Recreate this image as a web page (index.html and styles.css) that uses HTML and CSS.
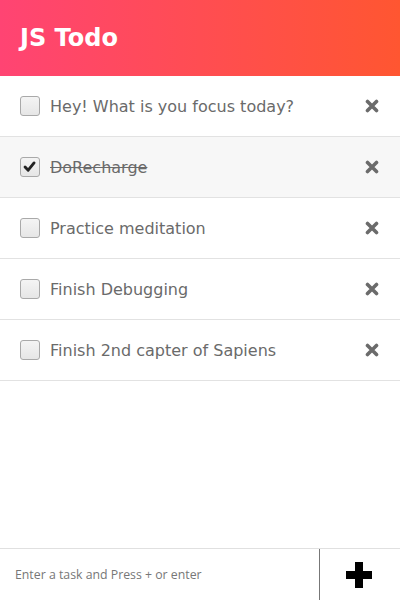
FILE: index.html
```html
<!DOCTYPE html>
<html>
<head>
<meta charset="utf-8">
<link rel="stylesheet" href="styles.css">
</head>
<body>
<div class="app">
  <header class="header"><h1 class="title">JS Todo</h1></header>
  <ul class="list">
    <li class="item"><span class="box"></span><span class="text">Hey! What is you focus today?</span><svg class="del" viewBox="0 0 14 14" width="14" height="14"><path d="M2.5 2.5 L11.5 11.5 M11.5 2.5 L2.5 11.5" stroke="#6b6b6b" stroke-width="3.6" stroke-linecap="round"/></svg></li>
    <li class="item done"><span class="box"><svg viewBox="0 0 20 20" width="18" height="18"><path d="M4.5 10 L8 13.5 L14.5 5.5" fill="none" stroke="#222" stroke-width="3.2" stroke-linecap="round" stroke-linejoin="round"/></svg></span><span class="text">DoRecharge</span><svg class="del" viewBox="0 0 14 14" width="14" height="14"><path d="M2.5 2.5 L11.5 11.5 M11.5 2.5 L2.5 11.5" stroke="#6b6b6b" stroke-width="3.6" stroke-linecap="round"/></svg></li>
    <li class="item"><span class="box"></span><span class="text">Practice meditation</span><svg class="del" viewBox="0 0 14 14" width="14" height="14"><path d="M2.5 2.5 L11.5 11.5 M11.5 2.5 L2.5 11.5" stroke="#6b6b6b" stroke-width="3.6" stroke-linecap="round"/></svg></li>
    <li class="item"><span class="box"></span><span class="text">Finish Debugging</span><svg class="del" viewBox="0 0 14 14" width="14" height="14"><path d="M2.5 2.5 L11.5 11.5 M11.5 2.5 L2.5 11.5" stroke="#6b6b6b" stroke-width="3.6" stroke-linecap="round"/></svg></li>
    <li class="item"><span class="box"></span><span class="text">Finish 2nd capter of Sapiens</span><svg class="del" viewBox="0 0 14 14" width="14" height="14"><path d="M2.5 2.5 L11.5 11.5 M11.5 2.5 L2.5 11.5" stroke="#6b6b6b" stroke-width="3.6" stroke-linecap="round"/></svg></li>
  </ul>
  <footer class="footer">
    <input class="input" type="text" placeholder="Enter a task and Press + or enter">
    <button class="add"><svg viewBox="0 0 26 26" width="26" height="26"><rect x="9" y="0" width="8" height="26" fill="#000"/><rect x="0" y="9" width="26" height="8" fill="#000"/></svg></button>
  </footer>
</div>
</body>
</html>
```
FILE: styles.css
```css
* { box-sizing: border-box; }
html, body { margin: 0; padding: 0; }
body { font-family: "DejaVu Sans", sans-serif; background: #fff; }
.app { width: 400px; height: 600px; display: flex; flex-direction: column; }
.header {
  height: 76px;
  background: linear-gradient(to right, #ff4473, #ff5631);
  display: flex; align-items: center;
  padding-left: 20px;
}
.title { margin: 0; color: #fff; font-size: 24px; font-weight: bold; }
.list { list-style: none; margin: 0; padding: 0; flex: 1; }
.item {
  height: 61px;
  border-bottom: 1px solid #e2e2e2;
  display: flex; align-items: center;
  padding: 0 20px;
  color: #6a6a6a;
  font-size: 16px;
}
.item.done { background: #f7f7f7; }
.item.done .text { text-decoration: line-through; }
.box {
  width: 20px; height: 20px;
  border: 1px solid #a9a9a9;
  border-radius: 3px;
  background: linear-gradient(#f4f4f4, #e6e6e6);
  margin-right: 10px;
  flex: none;
  display: flex; align-items: center; justify-content: center;
}
.text { flex: 1; }
.del { flex: none; margin-right: 1px; }
.footer {
  height: 52px;
  border-top: 1px solid #e0e0e0;
  display: flex;
}
.input {
  flex: none; width: 320px; height: 100%;
  border: 0; border-right: 1px solid #777;
  padding: 0 0 0 15px;
  font-family: "Open Sans", sans-serif; font-size: 12.3px;
  outline: none;
}
.input::placeholder { color: #777; }
.add {
  flex: 1; border: 0; background: #fff; padding: 0;
  display: flex; align-items: center; justify-content: center;
  padding-right: 2px;
}
```
